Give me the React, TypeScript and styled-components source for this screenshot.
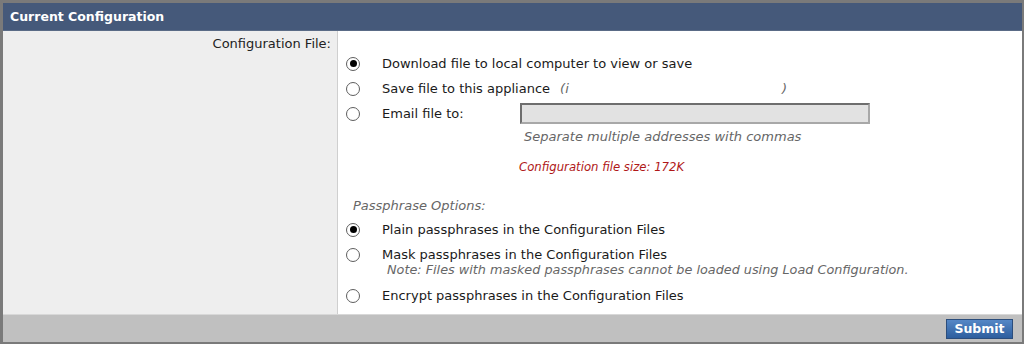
import React from "react";
import styled, { createGlobalStyle } from "styled-components";

const Global = createGlobalStyle`
  html, body { margin: 0; padding: 0; background: #ffffff; }
  body { font-family: "DejaVu Sans", Verdana, sans-serif; font-size: 13px; color: #222; }
`;

const Panel = styled.div`
  width: 1024px;
  height: 344px;
  box-sizing: border-box;
  border: 3px solid #7a7a7a;
  border-right-width: 2px;
  border-bottom-width: 2px;
  display: flex;
  flex-direction: column;
`;

const Header = styled.div`
  height: 27px;
  background: #45597a;
  color: #ffffff;
  font-weight: bold;
  font-size: 12.5px;
  display: flex;
  align-items: center;
  padding-left: 7px;
  border-bottom: 1px solid #5a6b86;
`;

const Body = styled.div`
  flex: 1;
  display: grid;
  grid-template-columns: 335px 1fr;
  min-height: 0;
`;

const LabelCol = styled.div`
  background: #eeeeee;
  border-right: 1px solid #cfcfcf;
  text-align: right;
  padding: 5px 6px 0 0;
  font-size: 13px;
`;

const FieldCol = styled.div`
  background: #ffffff;
  padding: 20px 0 0 8px;
  display: flex;
  flex-direction: column;
`;

const Row = styled.div<{ $h?: number; $mt?: number }>`
  display: flex;
  align-items: center;
  height: ${(p) => p.$h ?? 25}px;
  margin-top: ${(p) => p.$mt ?? 0}px;
`;

const Radio = styled.span<{ $checked?: boolean }>`
  width: 14px;
  height: 14px;
  box-sizing: border-box;
  border-radius: 50%;
  border: 1px solid #5e5e5e;
  background: #fff;
  display: inline-flex;
  align-items: center;
  justify-content: center;
  margin-right: 22px;
  flex-shrink: 0;
  &::after {
    content: "";
    width: 7px;
    height: 7px;
    border-radius: 50%;
    background: ${(p) => (p.$checked ? "#000" : "transparent")};
  }
`;

const Label = styled.span`
  font-size: 13px;
  line-height: 15px;
  color: #1a1a1a;
  white-space: nowrap;
`;

const Paren = styled.span<{ $w?: number; $ml?: number }>`
  font-style: italic;
  color: #666;
  display: inline-block;
  width: ${(p) => p.$w ?? 0}px;
  margin-left: ${(p) => p.$ml ?? 0}px;
`;

const EmailLabel = styled(Label)`
  width: 138px;
`;

const EmailInput = styled.div`
  width: 350px;
  height: 21px;
  box-sizing: border-box;
  background: #e2e2e2;
  border: 2px solid #6e6e6e;
  border-right-color: #a8a8a8;
  border-bottom-color: #a8a8a8;
`;

const Hint = styled.div<{ $indent: number; $mt: number; $size?: number }>`
  padding-left: ${(p) => p.$indent}px;
  margin-top: ${(p) => p.$mt}px;
  font-style: italic;
  color: #666;
  font-size: ${(p) => p.$size ?? 13}px;
  line-height: 15px;
  white-space: nowrap;
`;

const SizeNote = styled.div`
  padding: 16px 0 0 173px;
  font-style: italic;
  color: #b01818;
  font-size: 11.7px;
  line-height: 14px;
`;

const SectionTitle = styled.div`
  padding: 24px 0 4px 7px;
  font-style: italic;
  color: #666;
  font-size: 13px;
  line-height: 15px;
`;

const Footer = styled.div`
  height: 27px;
  background: #c0c0c0;
  border-top: 1px solid #d8d8d8;
  display: flex;
  align-items: center;
  justify-content: flex-end;
  padding-right: 9px;
`;

const SubmitButton = styled.button`
  width: 67px;
  height: 20px;
  border: 1px solid #2b4d7c;
  background: linear-gradient(#5587c6, #2d5e9e);
  color: #ffffff;
  font-family: "DejaVu Sans", Verdana, sans-serif;
  font-weight: bold;
  font-size: 12.5px;
  padding: 0;
`;

export default function App() {
  return (
    <>
      <Global />
      <Panel>
        <Header>Current Configuration</Header>
        <Body>
          <LabelCol>Configuration File:</LabelCol>
          <FieldCol>
            <Row>
              <Radio $checked />
              <Label>Download file to local computer to view or save</Label>
            </Row>
            <Row>
              <Radio />
              <Label>
                Save file to this appliance
                <Paren $ml={10} $w={222}>(i</Paren>
                <Paren>)</Paren>
              </Label>
            </Row>
            <Row>
              <Radio />
              <EmailLabel>Email file to:</EmailLabel>
              <EmailInput />
            </Row>
            <Hint $indent={178} $mt={3}>Separate multiple addresses with commas</Hint>
            <SizeNote>Configuration file size: 172K</SizeNote>
            <SectionTitle>Passphrase Options:</SectionTitle>
            <Row>
              <Radio $checked />
              <Label>Plain passphrases in the Configuration Files</Label>
            </Row>
            <Row $h={17} $mt={4}>
              <Radio />
              <Label>Mask passphrases in the Configuration Files</Label>
            </Row>
            <Hint $indent={41} $mt={-1} $size={12.8}>
              Note: Files with masked passphrases cannot be loaded using Load Configuration.
            </Hint>
            <Row $mt={6}>
              <Radio />
              <Label>Encrypt passphrases in the Configuration Files</Label>
            </Row>
          </FieldCol>
        </Body>
        <Footer>
          <SubmitButton>Submit</SubmitButton>
        </Footer>
      </Panel>
    </>
  );
}
